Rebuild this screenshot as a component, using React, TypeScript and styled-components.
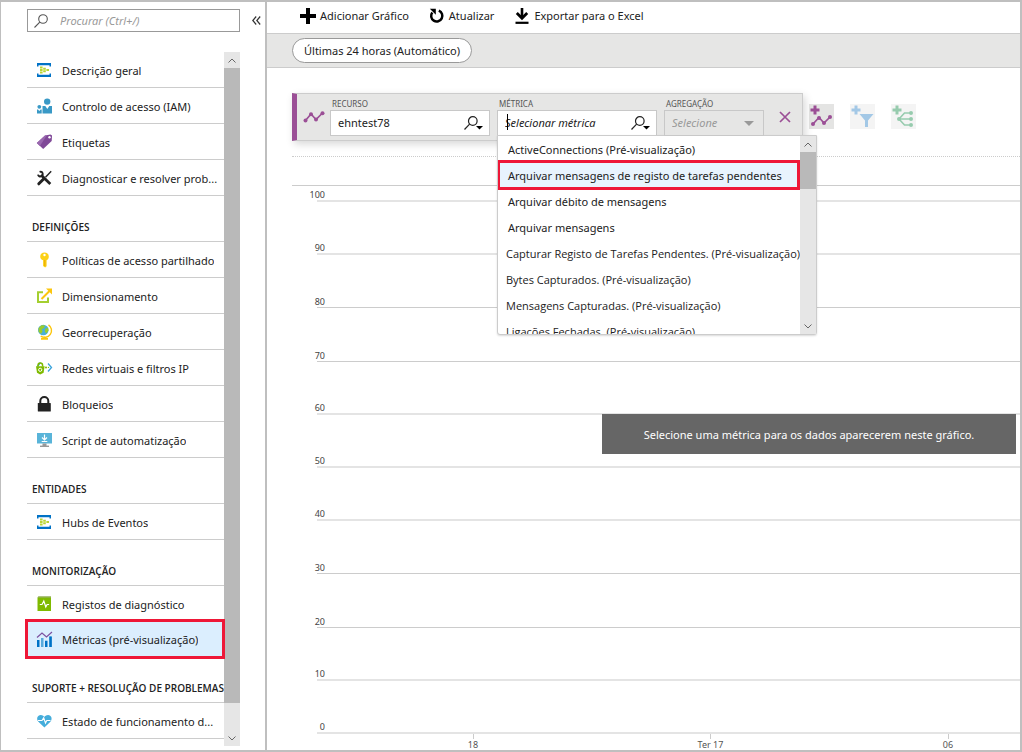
import React from 'react';
import styled, { createGlobalStyle, css } from 'styled-components';

const GlobalStyle = createGlobalStyle`
  *, *::before, *::after { box-sizing: border-box; }
  body {
    margin: 0;
    background: #fff;
    color: #222;
    font-family: "Noto Sans", "Open Sans", sans-serif;
    font-size: 11px;
    line-height: 16px;
  }
  button, input, select { font: inherit; color: inherit; margin: 0; }
  button { border: 0; padding: 0; background: none; cursor: pointer; }
  svg { display: block; flex: none; }
  ul { list-style: none; margin: 0; padding: 0; }
  h2 { margin: 0; }
`;

const Frame = styled.div`
  display: flex;
  min-height: 100vh;
  border: 2px solid #bfbfbf;
  border-left-width: 1px;
`;

/* ---------- Sidebar ---------- */

const Sidebar = styled.aside`
  flex: none;
  width: 266px;
  padding: 7px 0 4px 26px;
  border-right: 2px solid #bfbfbf;
  display: flex;
  flex-direction: column;
`;

const SearchRow = styled.div`
  display: flex;
  align-items: center;
  margin-bottom: 20px;
`;

const SearchBox = styled.label`
  display: flex;
  align-items: center;
  gap: 12px;
  width: 213px;
  height: 23px;
  padding: 0 6px;
  border: 1px solid #999;
`;

const SearchInput = styled.input`
  flex: 1;
  min-width: 0;
  border: 0;
  padding: 0;
  outline: 0;
  background: none;
  font-style: italic;
  &::placeholder { color: #999; opacity: 1; }
`;

const CollapseButton = styled.button`
  flex: 1;
  padding-left: 8px;
  display: flex;
  justify-content: center;
`;

const NavArea = styled.div`
  flex: 1;
  display: flex;
  width: 213px;
`;

const Nav = styled.nav`
  flex: 1;
  min-width: 0;
`;

const GroupTitle = styled.h2`
  height: 46px;
  padding: 23px 0 0 5px;
  border-bottom: 1px solid #ccc;
  font-family: "Open Sans", "Noto Sans", sans-serif;
  font-size: 10px;
  font-weight: 600;
  white-space: nowrap;
`;

const NavLink = styled.a<{ $selected?: boolean }>`
  position: relative;
  display: flex;
  align-items: center;
  gap: 9px;
  height: ${p => (p.$selected ? 35 : 36)}px;
  padding: 0 5px 0 8px;
  border-bottom: 1px solid #ccc;
  color: #222;
  text-decoration: none;
  ${p => p.$selected && css`
    background: #dbeefe;
    border-bottom-color: transparent;
    &::after {
      content: '';
      position: absolute;
      inset: -3px -1px -3px -2px;
      border: 3px solid #ee1737;
    }
  `}
`;

const NavText = styled.span`
  padding-top: 2px;
  overflow: hidden;
  white-space: nowrap;
  text-overflow: ellipsis;
`;

const ScrollTrack = styled.div`
  flex: none;
  width: 16px;
  background: #e6e6e6;
  display: flex;
  flex-direction: column;
`;

const ScrollThumb = styled.div<{ $size: string }>`
  flex: 0 0 ${p => p.$size};
  background: #b9b9b9;
`;

const ScrollArrow = styled.button<{ $end?: boolean }>`
  flex: none;
  height: 16px;
  display: flex;
  align-items: center;
  justify-content: center;
  margin-top: ${p => (p.$end ? 'auto' : 0)};
`;

/* ---------- Main area ---------- */

const Main = styled.main`
  flex: 1;
  min-width: 0;
  display: flex;
  flex-direction: column;
`;

const Toolbar = styled.div`
  display: flex;
  gap: 20px;
  height: 31px;
  padding: 0 33px 4px;
`;

const ToolButton = styled.button`
  display: flex;
  align-items: center;
  gap: 4px;
`;

const FilterBar = styled.div`
  height: 35px;
  padding: 4px 25px;
  background: #e6e6e5;
  border: 1px solid #ccc;
  border-width: 1px 0;
`;

const Pill = styled.button`
  height: 25px;
  padding: 0 11px;
  background: #fff;
  border: 1px solid #999;
  border-radius: 13px;
`;

const Content = styled.section`
  flex: 1;
  display: flex;
  flex-direction: column;
  padding: 25px 0 0 25px;
`;

const MetricRow = styled.div`
  display: flex;
  align-items: flex-start;
  gap: 16px;
  height: 64px;
  border-bottom: 1px dotted #ccc;
`;

const MetricCard = styled.div`
  position: relative;
  z-index: 2;
  display: flex;
  align-items: flex-start;
  gap: 7px;
  height: 48px;
  padding: 4px 11px 0 6px;
  background: #e6e6e5;
  border: 1px solid #ccc;
  border-left: 5px solid #9b4f96;
  box-shadow: 2px 3px 8px rgba(0, 0, 0, 0.16);
`;

const CardIcon = styled.div`
  padding-top: 13px;
  margin-right: -2px;
`;

const Field = styled.div<{ $width: number }>`
  position: relative;
  width: ${p => p.$width}px;
`;

const FieldLabel = styled.label`
  display: block;
  padding-left: 2px;
  font-size: 8px;
  line-height: 12px;
  color: #555;
`;

const FieldBox = styled.div<{ $caret?: boolean }>`
  position: relative;
  display: flex;
  align-items: center;
  height: 26px;
  padding: 0 6px 0 7px;
  background: #fff;
  border: 1px solid #c8c8c8;
  ${p => p.$caret && css`
    &::before {
      content: '';
      position: absolute;
      left: 9px;
      top: 3px;
      width: 1px;
      height: 16px;
      background: #000;
    }
  `}
`;

const FieldInput = styled.input`
  flex: 1;
  min-width: 0;
  border: 0;
  padding: 0;
  outline: 0;
  background: none;
  &::placeholder { color: #222; opacity: 1; font-style: italic; }
`;

const DisabledBox = styled(FieldBox)`
  background: #e6e6e5;
  padding-right: 9px;
`;

const FieldSelect = styled.select`
  flex: 1;
  min-width: 0;
  appearance: none;
  border: 0;
  padding: 0;
  background: none;
  font-style: italic;
  opacity: 1;
  &:disabled { color: #999; }
`;

const RemoveButton = styled.button`
  padding: 13px 0 0 8px;
`;

const IconButtons = styled.div`
  display: flex;
  gap: 16px;
  padding-top: 11px;
  margin-left: -10px;
`;

const SquareButton = styled.button<{ $dim?: boolean }>`
  width: 25px;
  height: 25px;
  background: ${p => (p.$dim ? '#f4f4f4' : '#e4e4e3')};
`;

const Menu = styled.div`
  position: absolute;
  top: 37px;
  left: 0;
  width: 320px;
  height: 200px;
  display: flex;
  background: #fff;
  border: 1px solid #ccc;
  border-radius: 0 0 3px 3px;
  box-shadow: 0 1px 2px rgba(0, 0, 0, 0.15);
`;

const MenuList = styled.ul`
  flex: 1;
  min-width: 0;
  padding-top: 1px;
  overflow: hidden;
`;

const MenuItem = styled.li<{ $selected?: boolean; $tight?: boolean }>`
  height: 26px;
  padding-left: ${p => (p.$tight ? 8 : 10)}px;
  font-family: ${p => (p.$tight ? '"Open Sans", "Noto Sans"' : '"Noto Sans", "Open Sans"')}, sans-serif;
  line-height: 26px;
  white-space: nowrap;
  ${p => p.$selected && css`
    position: relative;
    background: #e8f3fd;
    &::after {
      content: '';
      position: absolute;
      inset: -3px 0 -1px -1px;
      border: 3px solid #ee1737;
    }
  `}
`;

/* ---------- Chart ---------- */

const Chart = styled.div`
  position: relative;
  flex: 1;
  display: flex;
  flex-direction: column;
  margin-top: 28px;
  border-top: 1px solid #ccc;
`;

const GridRow = styled.div<{ $first?: boolean; $soft?: boolean }>`
  flex: ${p => (p.$first ? '0 0 16px' : '1 0 20px')};
  display: flex;
  align-items: flex-end;
  margin-left: 25px;
  border-bottom: ${p => (p.$soft ? '2px solid #e4e4e4' : '1px solid #ccc')};
`;

const AxisValue = styled.span`
  width: 25px;
  margin-left: -17px;
  text-align: right;
  font-size: 9px;
  line-height: 10px;
  color: #444;
`;

const TimeAxis = styled.div`
  display: flex;
  justify-content: space-between;
  height: 16px;
  padding: 0 47px 0 156px;
`;

const Tick = styled.div`
  width: 50px;
  display: flex;
  flex-direction: column;
  align-items: center;
  font-size: 9px;
  line-height: 11px;
  color: #555;
  &::before {
    content: '';
    width: 1px;
    height: 5px;
    background: #ccc;
  }
`;

const Banner = styled.div`
  position: absolute;
  top: 228px;
  right: 4px;
  width: 55%;
  min-width: 414px;
  padding: 13px 20px 11px;
  background: #666;
  color: #fff;
  text-align: center;
  white-space: nowrap;
`;

/* ---------- Icons ---------- */

const SearchIcon = ({ color = '#555', size = 14 }: { color?: string; size?: number }) => (
  <svg width={size} height={size} viewBox="0 0 14 14" fill="none" stroke={color} strokeWidth="1.1">
    <circle cx="9" cy="5" r="4.3" />
    <path d="M5.8 8.2 0.5 13.5" />
  </svg>
);

const LookupIcon = () => (
  <svg width="19" height="14" viewBox="0 0 19 14" fill="none" stroke="#222" strokeWidth="1.2">
    <circle cx="8.8" cy="5" r="4.3" />
    <path d="M5.6 8.2 0.5 13.5" />
    <path d="M12 10h7l-3.500 3.600z" fill="#000" stroke="none" />
  </svg>
);

const Chevron = ({ down }: { down?: boolean }) => (
  <svg width="8" height="5" viewBox="0 0 8 5" fill="none" stroke="#666">
    <path d={down ? 'M0.500 0.500 4 4 7.500 0.500' : 'M0.500 4.500 4 1 7.500 4.500'} />
  </svg>
);

const HubIcon = () => (
  <svg width="18" height="16" viewBox="0 0 18 16">
    <path d="M2 1h14v3.500h-1.500V3.200h-11v1.300H2zM2 15h14v-3.500h-1.500v1.300h-11v-1.300H2z" fill="#0072c6" />
    <g fill="#b8d432">
      <path d="M5 4.400h2.600v2H5zM5 7h2.600v2H5zM5 9.600h2.600v2H5zM8.200 5.700h2.600v2H8.200zM8.200 8.300h2.600v2H8.200zM11.400 7H14v2h-2.600z" />
    </g>
  </svg>
);

const PeopleIcon = () => (
  <svg width="18" height="16" viewBox="0 0 18 16" fill="#3999c6">
    <circle cx="12.200" cy="3.600" r="3.200" />
    <path d="M7.500 15.500V8h2.800l2 3 2-3H17v7.500z" />
    <circle cx="4.300" cy="8.800" r="1.900" />
    <path d="M2 15.500v-4h1l1.300 1.600 1.400-1.600h1v4z" />
  </svg>
);

const TagIcon = () => (
  <svg width="18" height="16" viewBox="0 0 18 16">
    <path d="M1.800 9 10 1.500 15.500.5 17 1.500l-.3 5.600L8.200 15z" fill="#804998" />
    <path d="M1.800 9 10 1.500l2-.4L4.900 12z" fill="#9a68af" />
    <circle cx="14.500" cy="3.300" r="1.200" fill="#fff" />
  </svg>
);

const ToolsIcon = () => (
  <svg width="18" height="16" viewBox="0 0 18 16" fill="none" stroke="#222">
    <path d="M6 5 15.300 14" strokeWidth="2.800" />
    <path d="M16.200 1.300 10.500 7.300" strokeWidth="1.400" />
    <path d="M8.600 9 3.800 13.800" strokeWidth="3" strokeLinecap="round" />
    <path d="M4.600 1.800a2.400 2.400 0 1 1-1.600 2.800" strokeWidth="1.900" />
  </svg>
);

const KeyIcon = () => (
  <svg width="18" height="16" viewBox="0 0 18 16">
    <path d="M9.500.5a4.300 4.300 0 0 1 4.300 4.200c0 1.800-1 2.800-2.200 3.500v6l-1.500 1.300L8.100 14V8.200C6.500 7.500 5.200 6.500 5.200 4.700A4.300 4.300 0 0 1 9.500.5z" fill="#fcd116" />
    <circle cx="9.500" cy="3" r="1.200" fill="#fff" />
    <path d="M9.800 8v6" stroke="#e8a800" />
  </svg>
);

const ScaleIcon = () => (
  <svg width="18" height="16" viewBox="0 0 18 16" fill="none">
    <path d="M8 4.200H3V14h10V9.500" stroke="#a4cf30" strokeWidth="2" />
    <path d="M6.500 11 14.500 3" stroke="#fcc60e" strokeWidth="2" />
    <path d="M11 .5h6v6z" fill="#fcc60e" />
  </svg>
);

const GlobeIcon = () => (
  <svg width="18" height="16" viewBox="0 0 18 16" fill="none">
    <path d="M13.500.8a6.800 6.800 0 0 1-7.800 11.400" stroke="#fcc60e" strokeWidth="1.400" />
    <path d="M9.500 12.500v2M6 14.900h7" stroke="#fcc60e" strokeWidth="1.600" />
    <circle cx="8.300" cy="6" r="5.300" fill="#4ab0d8" />
    <path d="M3.600 4 6.600 1.200l3.500.2L8.900 4 6.600 5.200l1 2-1.500 2.500L3.600 8z" fill="#9bcc2b" />
    <path d="m10.100 5 3-1.500.3 3-2 3-1.500-1.800z" fill="#9bcc2b" />
  </svg>
);

const NetworkIcon = () => (
  <svg width="18" height="16" viewBox="0 0 18 16" fill="none">
    <path d="m5.500 2.500-3 4M13 3.500l3.500 4-3.500 4" stroke="#3aa3dc" strokeWidth="1.300" />
    <path d="M3 6.500V5.400a2 2 0 0 1 4.600 0v1.100" stroke="#7fba00" strokeWidth="1.500" />
    <path d="M1 6.300h8.600l-1 6.500-3.400 1.600-3.200-1.600z" fill="#7fba00" />
    <circle cx="5.200" cy="9.800" r="1.600" stroke="#fff" />
    <circle cx="11" cy="7.400" r="1" fill="#7fba00" />
    <circle cx="13.500" cy="7.400" r=".7" fill="#7fba00" />
  </svg>
);

const LockIcon = () => (
  <svg width="18" height="16" viewBox="0 0 18 16" fill="none">
    <path d="M5.300 8V5a4 4 0 0 1 8 0v3" stroke="#222" strokeWidth="2" />
    <rect x="2.800" y="7" width="13" height="8.500" rx=".6" fill="#222" />
  </svg>
);

const ScriptIcon = () => (
  <svg width="18" height="16" viewBox="0 0 18 16" fill="none">
    <path d="M2 1h15v10.500H2z" fill="#59b4d9" />
    <path d="M7.500 11.500h4V14h-4z" fill="#999" />
    <path d="M5 13.600h9V15H5z" fill="#999" />
    <path d="M9.500 2.500v5M7 5.500 9.500 8 12 5.500M6.700 9.500h5.600" stroke="#fff" strokeWidth="1.200" />
  </svg>
);

const LogsIcon = () => (
  <svg width="18" height="16" viewBox="0 0 18 16" fill="none">
    <path d="M2.500 1.500H16V15H2.500z" fill="#7fba00" />
    <path d="m2.500 1.500.8-1H16v1z" fill="#5e8a00" />
    <path d="M4.800 8.500h2.200L8.800 5l2 6 1.300-2.500h2" stroke="#fff" strokeWidth="1.200" />
  </svg>
);

const MetricsIcon = () => (
  <svg width="18" height="16" viewBox="0 0 18 16" fill="none">
    <path d="M2 9h2.500v7H2zM10 9.800h2.500V16H10z" fill="#0072c6" />
    <path d="M6 7h2.500v9H6zM14 5.500h2.500V16H14z" fill="#59a9dc" />
    <path d="M14.500 5.500h2.300V16h-2.300z" fill="#0072c6" />
    <path d="M2 6.500 7 2l4.500 4L17 1" stroke="#7c50a0" strokeWidth="1.200" />
  </svg>
);

const HeartIcon = () => (
  <svg width="18" height="16" viewBox="0 0 18 16" fill="none">
    <path d="M9.400 14.500 3.400 8.800C1 6 2.400 2 5.700 2c1.900 0 3.200 1.200 3.700 2 .5-.8 1.800-2 3.700-2 3.300 0 4.700 4 2.300 6.800z" fill="#45addb" />
    <path d="M3 7.500h4l1.700-2.800 1.800 5.300 1.300-2.500h3.700" stroke="#fff" strokeWidth="1.100" />
  </svg>
);

const PlusIcon = () => (
  <svg width="16" height="16" viewBox="0 0 16 16">
    <path d="M6 0h4v6h6v4h-6v6H6v-6H0V6h6z" fill="#000" />
  </svg>
);

const RefreshIcon = () => (
  <svg width="16" height="16" viewBox="0 0 16 16" fill="none">
    <path d="M3.300 4.500A5.600 5.600 0 1 0 9.800 2.700" stroke="#000" strokeWidth="2.500" />
    <path d="M.8.800h6v6z" fill="#000" />
  </svg>
);

const DownloadIcon = () => (
  <svg width="16" height="16" viewBox="0 0 16 16" fill="none" stroke="#000">
    <path d="M8 0v10" strokeWidth="2.600" />
    <path d="M2.800 5 8 10.200 13.200 5" strokeWidth="2.800" />
    <path d="M1.500 14.800h13" strokeWidth="2.200" />
  </svg>
);

const LineIcon = () => (
  <svg width="22" height="12" viewBox="0 0 22 12" fill="none" stroke="#9b4f96" strokeWidth="1.700">
    <path d="M2.500 9.500 8 3l5 5.500L19.500 2" />
    <g fill="#9b4f96" stroke="none">
      <circle cx="2.500" cy="9.500" r="2" /><circle cx="8" cy="3.200" r="2" />
      <circle cx="13" cy="8.400" r="2" /><circle cx="19.500" cy="2.200" r="2" />
    </g>
  </svg>
);

const CloseIcon = () => (
  <svg width="12" height="12" viewBox="0 0 12 12" fill="none" stroke="#9b4f96" strokeWidth="1.700">
    <path d="m1 1 10 10M11 1 1 11" />
  </svg>
);

const AddMetricIcon = () => (
  <svg width="25" height="25" viewBox="0 0 25 25" fill="none">
    <path d="M6 1.500v9M1.500 6h9" stroke="#9b4f96" strokeWidth="3" />
    <path d="m4 20 6-6.500 5 5.500 6-6" stroke="#9b4f96" strokeWidth="1.700" />
    <g fill="#9b4f96">
      <circle cx="4" cy="20" r="2" /><circle cx="10" cy="14" r="2" />
      <circle cx="15" cy="19" r="2" /><circle cx="21" cy="13" r="2" />
    </g>
  </svg>
);

const AddFilterIcon = () => (
  <svg width="25" height="25" viewBox="0 0 25 25" fill="none">
    <path d="M6 1.500v9M1.500 6h9" stroke="#a3c8e6" strokeWidth="3" />
    <path d="M9.500 10h14L18 16.500V23h-3v-6.500z" fill="#a3c8e6" />
  </svg>
);

const AddSplitIcon = () => (
  <svg width="25" height="25" viewBox="0 0 25 25" fill="none" stroke="#97cbae">
    <path d="M6 1.500v9M1.500 6h9" strokeWidth="3" />
    <path d="M8 15h12M8 15l5.500-6H20M8 15l5.500 6H20" strokeWidth="1.600" />
    <g fill="#97cbae" stroke="none">
      <circle cx="8" cy="15" r="2" /><circle cx="20" cy="9" r="2" />
      <circle cx="20" cy="15" r="2" /><circle cx="20" cy="21" r="2" />
    </g>
  </svg>
);

/* ---------- Data ---------- */

type Entry = { label: string; icon: React.ReactNode; selected?: boolean };
const groups: { title?: string; items: Entry[] }[] = [
  {
    items: [
      { label: 'Descrição geral', icon: <HubIcon /> },
      { label: 'Controlo de acesso (IAM)', icon: <PeopleIcon /> },
      { label: 'Etiquetas', icon: <TagIcon /> },
      { label: 'Diagnosticar e resolver prob...', icon: <ToolsIcon /> },
    ],
  },
  {
    title: 'DEFINIÇÕES',
    items: [
      { label: 'Políticas de acesso partilhado', icon: <KeyIcon /> },
      { label: 'Dimensionamento', icon: <ScaleIcon /> },
      { label: 'Georrecuperação', icon: <GlobeIcon /> },
      { label: 'Redes virtuais e filtros IP', icon: <NetworkIcon /> },
      { label: 'Bloqueios', icon: <LockIcon /> },
      { label: 'Script de automatização', icon: <ScriptIcon /> },
    ],
  },
  { title: 'ENTIDADES', items: [{ label: 'Hubs de Eventos', icon: <HubIcon /> }] },
  {
    title: 'MONITORIZAÇÃO',
    items: [
      { label: 'Registos de diagnóstico', icon: <LogsIcon /> },
      { label: 'Métricas (pré-visualização)', icon: <MetricsIcon />, selected: true },
    ],
  },
  {
    title: 'SUPORTE + RESOLUÇÃO DE PROBLEMAS',
    items: [{ label: 'Estado de funcionamento d...', icon: <HeartIcon /> }],
  },
];

const metrics = [
  'ActiveConnections (Pré-visualização)',
  'Arquivar mensagens de registo de tarefas pendentes',
  'Arquivar débito de mensagens',
  'Arquivar mensagens',
  'Capturar Registo de Tarefas Pendentes. (Pré-visualização)',
  'Bytes Capturados. (Pré-visualização)',
  'Mensagens Capturadas. (Pré-visualização)',
  'Ligações Fechadas. (Pré-visualização)',
];

const axisValues = [100, 90, 80, 70, 60, 50, 40, 30, 20, 10, 0];
const softLines = [100, 90, 60, 50, 40, 10, 0];

export default function App() {
  return (
    <>
      <GlobalStyle />
      <Frame>
        <Sidebar>
          <SearchRow>
            <SearchBox>
              <SearchIcon />
              <SearchInput aria-label="Procurar" placeholder="Procurar (Ctrl+/)" />
            </SearchBox>
            <CollapseButton aria-label="Fechar menu">
              <svg width="9" height="9" viewBox="0 0 9 9" fill="none" stroke="#333" strokeWidth="1.200">
                <path d="M4.200.5.800 4.500l3.400 4M8.200.5 4.800 4.500l3.400 4" />
              </svg>
            </CollapseButton>
          </SearchRow>
          <NavArea>
            <Nav>
              {groups.map((group, i) => (
                <React.Fragment key={i}>
                  {group.title && <GroupTitle>{group.title}</GroupTitle>}
                  {group.items.map(item => (
                    <NavLink key={item.label} href="#" $selected={item.selected}>
                      {item.icon}
                      <NavText>{item.label}</NavText>
                    </NavLink>
                  ))}
                </React.Fragment>
              ))}
            </Nav>
            <ScrollTrack>
              <ScrollArrow aria-label="Subir"><Chevron /></ScrollArrow>
              <ScrollThumb $size="635px" />
              <ScrollArrow $end aria-label="Descer"><Chevron down /></ScrollArrow>
            </ScrollTrack>
          </NavArea>
        </Sidebar>

        <Main>
          <Toolbar>
            <ToolButton><PlusIcon />Adicionar Gráfico</ToolButton>
            <ToolButton><RefreshIcon />Atualizar</ToolButton>
            <ToolButton><DownloadIcon />Exportar para o Excel</ToolButton>
          </Toolbar>
          <FilterBar>
            <Pill>Últimas 24 horas (Automático)</Pill>
          </FilterBar>
          <Content>
            <MetricRow>
              <MetricCard>
                <CardIcon><LineIcon /></CardIcon>
                <Field $width={160}>
                  <FieldLabel htmlFor="recurso">RECURSO</FieldLabel>
                  <FieldBox>
                    <FieldInput id="recurso" defaultValue="ehntest78" />
                    <LookupIcon />
                  </FieldBox>
                </Field>
                <Field $width={160}>
                  <FieldLabel htmlFor="metrica">MÉTRICA</FieldLabel>
                  <FieldBox $caret>
                    <FieldInput id="metrica" placeholder="Selecionar métrica" />
                    <LookupIcon />
                  </FieldBox>
                  <Menu>
                    <MenuList role="listbox" aria-label="Métricas">
                      {metrics.map((name, i) => (
                        <MenuItem
                          key={name}
                          role="option"
                          aria-selected={i === 1}
                          $selected={i === 1}
                          $tight={i > 3}
                        >
                          {name}
                        </MenuItem>
                      ))}
                    </MenuList>
                    <ScrollTrack>
                      <ScrollArrow aria-label="Subir"><Chevron /></ScrollArrow>
                      <ScrollThumb $size="37px" />
                      <ScrollArrow $end aria-label="Descer"><Chevron down /></ScrollArrow>
                    </ScrollTrack>
                  </Menu>
                </Field>
                <Field $width={100}>
                  <FieldLabel htmlFor="agregacao">AGREGAÇÃO</FieldLabel>
                  <DisabledBox>
                    <FieldSelect id="agregacao" disabled>
                      <option>Selecione</option>
                    </FieldSelect>
                    <svg width="10" height="5" viewBox="0 0 10 5"><path d="M0 0h10L5 5z" fill="#999" /></svg>
                  </DisabledBox>
                </Field>
                <RemoveButton aria-label="Remover"><CloseIcon /></RemoveButton>
              </MetricCard>
              <IconButtons>
                <SquareButton aria-label="Adicionar métrica"><AddMetricIcon /></SquareButton>
                <SquareButton $dim aria-label="Adicionar filtro"><AddFilterIcon /></SquareButton>
                <SquareButton $dim aria-label="Dividir"><AddSplitIcon /></SquareButton>
              </IconButtons>
            </MetricRow>
            <Chart>
              {axisValues.map((value, i) => (
                <GridRow key={value} $first={i === 0} $soft={softLines.includes(value)}>
                  <AxisValue>{value}</AxisValue>
                </GridRow>
              ))}
              <TimeAxis>
                <Tick>18</Tick>
                <Tick>Ter 17</Tick>
                <Tick>06</Tick>
              </TimeAxis>
              <Banner>Selecione uma métrica para os dados aparecerem neste gráfico.</Banner>
            </Chart>
          </Content>
        </Main>
      </Frame>
    </>
  );
}
